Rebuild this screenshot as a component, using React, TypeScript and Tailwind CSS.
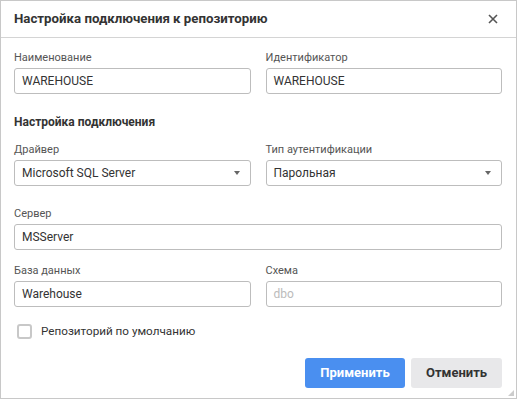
import React from "react";

const font = { fontFamily: "Roboto, 'Noto Sans', sans-serif" };

function Label({ children }: { children: React.ReactNode }) {
  return <div className="text-[11px] leading-[12px] text-[#555] h-[12px] mb-[4px]">{children}</div>;
}

function Input({ value, placeholder }: { value?: string; placeholder?: string }) {
  return (
    <div className="h-[26px] border border-[#bdbdbd] rounded-[3px] flex items-center px-[7px] text-[12px]">
      {value ? <span className="text-[#333]">{value}</span> : <span className="text-[#bbb]">{placeholder}</span>}
    </div>
  );
}

function Select({ value }: { value: string }) {
  return (
    <div className="h-[26px] border border-[#bdbdbd] rounded-[3px] flex items-center pl-[7px] pr-[10px] text-[12px] text-[#333]">
      <span className="flex-1">{value}</span>
      <svg width="6" height="4" viewBox="0 0 6 4"><path d="M0 0h6L3 4z" fill="#666" /></svg>
    </div>
  );
}

export default function App() {
  return (
    <div style={font} className="w-[517px] h-[399px] bg-white border border-[#c8c8c8] flex flex-col relative">
      <div className="h-[37px] border-b border-[#d4d4d4] flex items-center pl-[13px] pr-[18px] shrink-0">
        <div className="flex-1 text-[13.25px] font-bold text-[#333]">Настройка подключения к репозиторию</div>
        <svg width="10" height="10" viewBox="0 0 10 10"><path d="M1 1L9 9M9 1L1 9" stroke="#555" strokeWidth="1.6" /></svg>
      </div>
      <div className="flex-1 px-[13px] pr-[14px] pt-[14px] flex flex-col">
        <div className="grid grid-cols-2 gap-x-[15px]">
          <div>
            <Label>Наименование</Label>
            <Input value="WAREHOUSE" />
          </div>
          <div>
            <Label>Идентификатор</Label>
            <Input value="WAREHOUSE" />
          </div>
        </div>
        <div className="mt-[21px] text-[12px] leading-[14px] font-bold text-[#333]">Настройка подключения</div>
        <div className="grid grid-cols-2 gap-x-[15px] mt-[15px]">
          <div>
            <Label>Драйвер</Label>
            <Select value="Microsoft SQL Server" />
          </div>
          <div>
            <Label>Тип аутентификации</Label>
            <Select value="Парольная" />
          </div>
        </div>
        <div className="mt-[22px]">
          <Label>Сервер</Label>
          <Input value="MSServer" />
        </div>
        <div className="grid grid-cols-2 gap-x-[15px] mt-[15px]">
          <div>
            <Label>База данных</Label>
            <Input value="Warehouse" />
          </div>
          <div>
            <Label>Схема</Label>
            <Input placeholder="dbo" />
          </div>
        </div>
        <div className="flex items-center mt-[16px] ml-[3px]">
          <div className="w-[15px] h-[15px] border-2 border-[#c8c8c8] rounded-[3px]" />
          <div className="ml-[9px] text-[11.7px] text-[#333]">Репозиторий по умолчанию</div>
        </div>
        <div className="flex justify-end gap-[6px] mt-[17px]">
          <div className="w-[100px] h-[30px] rounded-[3px] bg-[#4a8ff0] text-white text-[13px] font-bold flex items-center justify-center">Применить</div>
          <div className="w-[91px] h-[30px] rounded-[3px] bg-[#e8e8ea] text-[#333] text-[13px] font-bold flex items-center justify-center">Отменить</div>
        </div>
      </div>
      <svg className="absolute right-[2px] bottom-[2px]" width="6" height="6" viewBox="0 0 6 6">
        <path d="M6 0V6H0z" fill="#ccc" />
      </svg>
    </div>
  );
}
